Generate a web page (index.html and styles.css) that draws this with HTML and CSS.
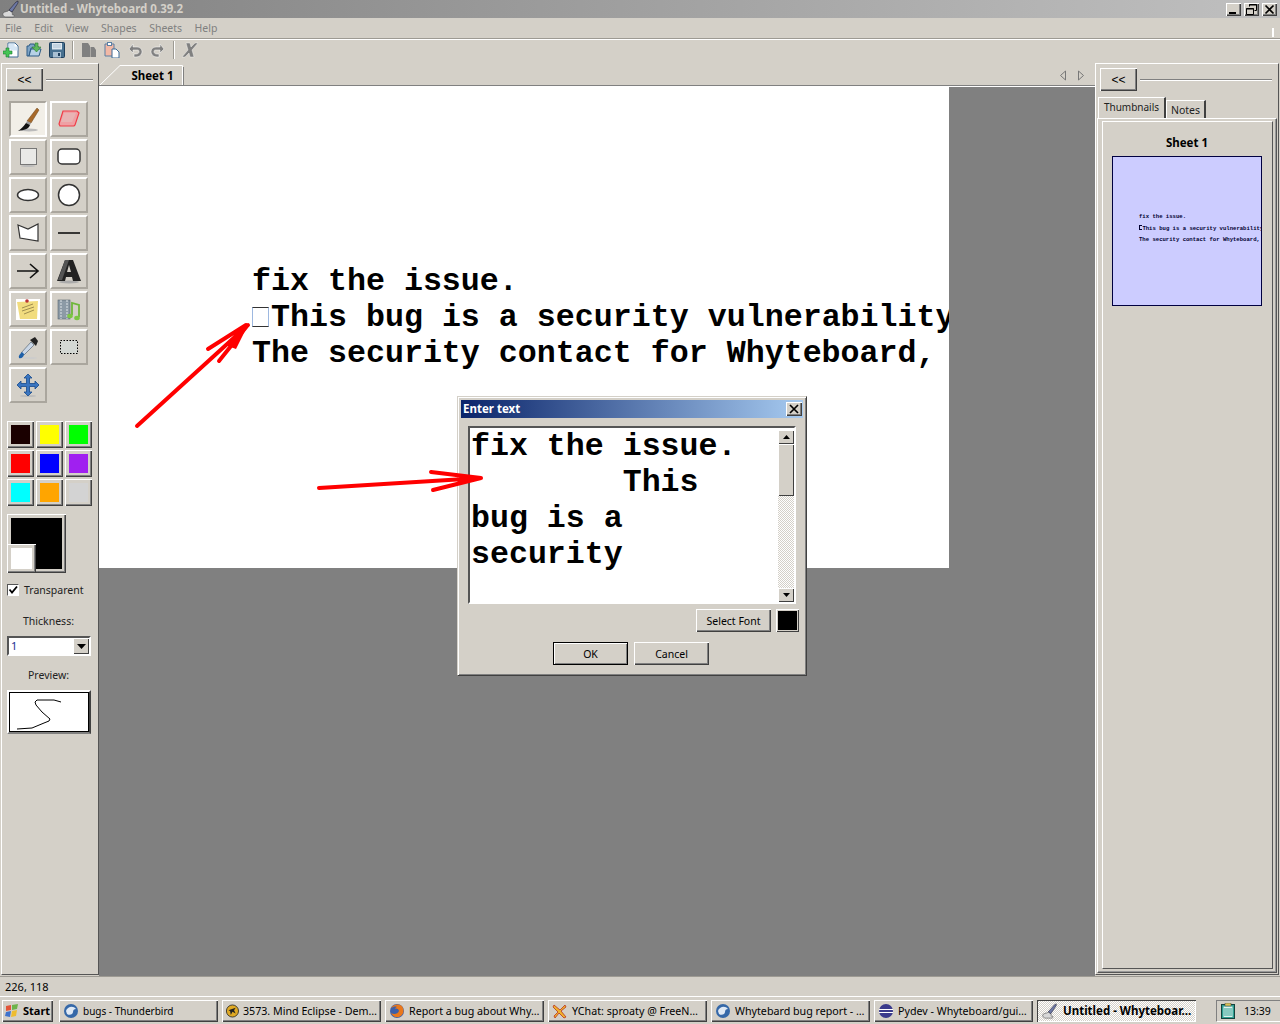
FILE: index.html
```html
<!DOCTYPE html>
<html lang="en">
<head>
    <meta charset="UTF-8">
    <title>Untitled - Whyteboard 0.39.2</title>
    <link rel="stylesheet" href="styles.css">
</head>
<body>
    <!-- window title -->
    <header class="titlebar">
        <svg class="app-icon" width="18" height="18" viewBox="0 0 18 18"><path d="M1 13c2-2 5-1 6-3l3 2c1 2-1 3 2 3 1 1 0 2-1 2H4c-2 0-4-2-3-4z" fill="#d8d8d8" stroke="#555" stroke-width=".7"/><path d="M7 10l7-8 2-1 0 2-6 9z" fill="#6d78a5" stroke="#223" stroke-width=".6"/></svg>
        <span class="title-text">Untitled - Whyteboard 0.39.2</span>
        <div class="win-buttons">
            <button class="win-btn"><svg width="15" height="13"><rect x="3" y="9" width="7" height="2" fill="#000"/></svg></button>
            <button class="win-btn"><svg width="15" height="13"><path d="M5.5 3.5V1.5h7v6h-2M2.5 5.5h7v6h-7z" fill="none" stroke="#000"/><path d="M5 2h8M2 6h8" stroke="#000"/></svg></button>
            <button class="win-btn"><svg width="15" height="13"><path d="M3.5 2.5l8 8M11.500 2.5l-8 8" stroke="#000" stroke-width="1.7"/></svg></button>
        </div>
    </header>

    <nav class="menubar">
        <span>File</span><span>Edit</span><span>View</span><span>Shapes</span><span>Sheets</span><span>Help</span>
        <i class="menu-grip"></i>
    </nav>

    <div class="toolbar">
        <svg class="tb-icon" viewBox="0 0 16 16"><path d="M5 1h7l3 3v11H5z" fill="#fff" stroke="#3d6b96"/><path d="M5.500 1.500h6v3h3v4H9L5.500 6z" fill="#d5e6f4"/><path d="M3 6h3v3h3v3H6v3H3v-3H0V9h3z" fill="#46c455" stroke="#1d7d33" stroke-width=".6"/></svg>
        <svg class="tb-icon" viewBox="0 0 16 16"><path d="M1 14V4h2l1-2h4l1 2h3v2H5L3 14z" fill="#7ea4c6" stroke="#2d5b85"/><path d="M3 14l2-7h10l-2 7z" fill="#b6d1e6" stroke="#2d5b85"/><path d="M9 1h3v4h3l-4.500 5L6 5h3z" fill="#5eb85c" stroke="#2c7d30" stroke-width=".6"/></svg>
        <svg class="tb-icon" viewBox="0 0 16 16"><rect x=".5" y=".5" width="15" height="15" rx="1" fill="#47708f" stroke="#1f3f5c"/><rect x="3" y="1" width="10" height="6.500" fill="#dfe8ef"/><path d="M4 3h8M4 5h8" stroke="#a9c0d2"/><rect x="4" y="10" width="8" height="5.500" fill="#a9c0d2"/><rect x="9" y="11" width="2" height="3" fill="#1f3f5c"/></svg>
        <i class="tb-sep"></i>
        <svg class="tb-icon" viewBox="0 0 16 16"><path d="M1 1h6l2 3v11H1z" fill="#808080"/><path d="M9.500 5H13l2 3v7H9.500z" fill="#808080"/></svg>
        <svg class="tb-icon" viewBox="0 0 16 16"><path d="M1 2h9v12H1z" fill="#f2b8a5" stroke="#5a7fa3"/><rect x="3.500" y=".5" width="4" height="3" fill="#fff" stroke="#5a7fa3"/><path d="M8 7h4l3 3v6H8z" fill="#fff" stroke="#3d6b96"/></svg>
        <svg class="tb-icon" viewBox="0 0 16 16"><path d="M2 7l4-5v3h4c3 0 5 2 5 4.500S13 15 9 15H7v-3h2c2 0 3-1 3-2.500S11 8 10 8H6v3z" fill="#808080" stroke="#fff" stroke-width=".5"/></svg>
        <svg class="tb-icon" viewBox="0 0 16 16"><path d="M14 7l-4-5v3H6C3 5 1 7 1 9.500S3 15 7 15h2v-3H7c-2 0-3-1-3-2.500S5 8 6 8h4v3z" fill="#808080" stroke="#fff" stroke-width=".5"/></svg>
        <i class="tb-sep"></i>
        <svg class="tb-icon" viewBox="0 0 16 16"><path d="M4 1h4l1 4 4-4h3L10 8l2 7H8L7 11l-4 4H0l6-7z" fill="#808080" stroke="#fff" stroke-width=".4"/></svg>
    </div>

    <main class="main">
        <!-- tools on the left -->
        <aside class="side side-left">
            <div class="side-head">
                <button class="btn collapse">&lt;&lt;</button>
                <i class="sash"></i>
            </div>
            <div class="tools">
                <button class="tool active"><svg width="26" height="26" viewBox="0 0 26 26"><ellipse cx="14" cy="24" rx="9" ry="1.500" fill="#bbb"/><path d="M22 2l2 2-8 13-4-2z" fill="#a8692a" stroke="#6b4416" stroke-width=".5"/><path d="M12 15l4 2-1 2-4-2z" fill="#999"/><path d="M11 17l4 2c-1 4-6 5-12 6 3-2 5-4 8-8z" fill="#111"/></svg></button>
                <button class="tool"><svg width="26" height="26" viewBox="0 0 26 26"><path d="M7 5h14l2 2-4 12-1 1H4l-1-2z" fill="#efa0a4" stroke="#f03c46" stroke-width="1.200"/><path d="M8 7h12l-4 9H5z" fill="#e8b4b4"/></svg></button>
                <button class="tool"><svg width="24" height="24" viewBox="0 0 24 24"><ellipse cx="12" cy="21" rx="7" ry="1" fill="#bbb"/><rect x="4.500" y="3.500" width="16" height="16" fill="#e9e9e7" stroke="#777"/></svg></button>
                <button class="tool"><svg width="26" height="26" viewBox="0 0 26 26"><rect x="2" y="5" width="22" height="15" rx="4" fill="#fff" stroke="#333" stroke-width="1.500"/></svg></button>
                <button class="tool"><svg width="26" height="26" viewBox="0 0 26 26"><ellipse cx="13" cy="13" rx="10.500" ry="5.500" fill="#fff" stroke="#333" stroke-width="1.500"/></svg></button>
                <button class="tool"><svg width="26" height="26" viewBox="0 0 26 26"><circle cx="13" cy="13" r="10.500" fill="#fff" stroke="#333" stroke-width="1.500"/></svg></button>
                <button class="tool"><svg width="26" height="26" viewBox="0 0 26 26"><path d="M3 5l10 4 10-5v17L5 18z" fill="#fff" stroke="#333" stroke-width="1.200"/></svg></button>
                <button class="tool"><svg width="26" height="26" viewBox="0 0 26 26"><path d="M2 13h22" stroke="#111" stroke-width="1.600"/></svg></button>
                <button class="tool"><svg width="26" height="26" viewBox="0 0 26 26"><path d="M2 13h21M15 6l8 7-8 7" fill="none" stroke="#111" stroke-width="1.600"/></svg></button>
                <button class="tool"><svg width="26" height="26" viewBox="0 0 26 26"><ellipse cx="13" cy="24" rx="10" ry="1.500" fill="#aaa"/><path d="M9 2h8l8 21h-8l-1-4h-6l-1 4H1z" fill="#222"/><path d="M13 7l-2 7h4z" fill="#d4d0c8"/><path d="M9 2h4L6 22H2z" fill="#555"/></svg></button>
                <button class="tool"><svg width="26" height="26" viewBox="0 0 26 26"><rect x="1" y="3" width="24" height="21" fill="#fff"/><path d="M2 6l21-1-1 18H5z" fill="#f1dc7e"/><circle cx="12" cy="5" r="1.800" fill="#b33"/><path d="M7 12l11-4M7 15l12-4M9 18l10-4" stroke="#8a7a44" stroke-width=".8"/></svg></button>
                <button class="tool"><svg width="26" height="26" viewBox="0 0 26 26"><rect x="2" y="4" width="12" height="19" fill="#8c9aa6" stroke="#56636e" stroke-width=".6"/><path d="M5 4v19M11 4v19" stroke="#dfe4e8" stroke-dasharray="2 1"/><path d="M16 19V7l7 2v12" fill="none" stroke="#6fb73c" stroke-width="1.800"/><ellipse cx="14" cy="20" rx="2.800" ry="2.200" fill="#7cc544"/><ellipse cx="21" cy="22" rx="2.800" ry="2.200" fill="#7cc544"/></svg></button>
                <button class="tool"><svg width="26" height="26" viewBox="0 0 26 26"><ellipse cx="14" cy="24" rx="8" ry="1" fill="#ccc"/><path d="M6 19L16 8l3 3L9 21z" fill="#c9d6e6" stroke="#456" stroke-width=".6"/><path d="M15 6l6 6 2-5-3-4z" fill="#222"/><path d="M7 18c-2 2-4 4-3 6 2 1 5-1 5-4z" fill="#1d5fa8"/></svg></button>
                <button class="tool"><svg width="24" height="24" viewBox="0 0 24 24"><rect x="3.500" y="5.500" width="17" height="13" fill="#d4d8d4" stroke="#000" stroke-dasharray="1.500 1.500"/></svg></button>
                <button class="tool"><svg width="26" height="26" viewBox="0 0 26 26"><ellipse cx="13" cy="24" rx="8" ry="1" fill="#bbb"/><path d="M13 2l4 4h-2.500v5.500H20V9l4 4-4 4v-2.500h-5.500V20H17l-4 4-4-4h2.500v-5.500H6V17l-4-4 4-4v2.500h5.500V6H9z" fill="#3a75c0" stroke="#174a8c" stroke-width=".8"/></svg></button>
            </div>

            <div class="swatches">
                <span class="swatch"><i class="c-dark"></i></span>
                <span class="swatch"><i class="c-yellow"></i></span>
                <span class="swatch"><i class="c-lime"></i></span>
                <span class="swatch"><i class="c-red"></i></span>
                <span class="swatch"><i class="c-blue"></i></span>
                <span class="swatch"><i class="c-purple"></i></span>
                <span class="swatch"><i class="c-cyan"></i></span>
                <span class="swatch"><i class="c-orange"></i></span>
                <span class="swatch"><i class="c-grey"></i></span>
            </div>

            <div class="picker">
                <span class="picker-bg"><i></i></span>
                <span class="picker-fg"><i></i></span>
            </div>

            <label class="check-row">
                <span class="checkbox"><svg width="10" height="10" viewBox="0 0 10 10"><path d="M1.500 4.500l2.500 3 5-6" fill="none" stroke="#000" stroke-width="1.800"/></svg></span>
                Transparent
            </label>
            <p class="side-label thick-label">Thickness:</p>
            <div class="combo">
                <span class="combo-val">1</span>
                <span class="combo-btn"><svg width="9" height="5"><path d="M0 0h9L4.500 5z" fill="#000"/></svg></span>
            </div>
            <p class="side-label preview-label">Preview:</p>
            <div class="preview">
                <svg width="76" height="38" viewBox="0 0 76 38"><path d="M6 35l15-1 12-5 5-2 1-2-8-7-6-7-1-3 2-2h17l7 2" fill="none" stroke="#000"/></svg>
            </div>
        </aside>

        <!-- tabs and the drawing sheet -->
        <section class="center">
            <div class="tabbar">
                <div class="sheet-tab">
                    <svg class="tab-edge" width="84" height="20" viewBox="0 0 84 20"><path d="M0 20L20 .5h62.500V20" fill="#d4d0c8" stroke="#fff"/><path d="M83.500 2v18" stroke="#808080"/></svg>
                    <span>Sheet 1</span>
                </div>
                <div class="tab-nav">
                    <svg width="8" height="11"><path d="M6.500 1v9l-5-4.500z" fill="none" stroke="#777"/></svg>
                    <svg width="8" height="11"><path d="M1.500 1v9l5-4.500z" fill="none" stroke="#777"/></svg>
                </div>
            </div>
            <div class="canvas">
                <div class="sheet">
                    <pre class="sheet-text">fix the issue.
<span class="box-glyph"></span>This bug is a security vulnerability
The security contact for Whyteboard,</pre>
                </div>
            </div>
        </section>

        <!-- thumbnails on the right -->
        <aside class="side side-right">
            <div class="side-head">
                <button class="btn collapse">&lt;&lt;</button>
                <i class="sash"></i>
            </div>
            <div class="note-tabs">
                <span class="note-tab current">Thumbnails</span>
                <span class="note-tab">Notes</span>
            </div>
            <div class="note-body">
                <div class="thumb-panel">
                    <p class="thumb-title">Sheet 1</p>
                    <div class="thumb">
                        <pre class="thumb-text">fix the issue.
<span class="thumb-box"></span>This bug is a security vulnerability
The security contact for Whyteboard,</pre>
                    </div>
                </div>
            </div>
        </aside>
    </main>

    <footer class="statusbar">226, 118</footer>

    <div class="taskbar">
        <button class="task start">
            <svg width="16" height="16" viewBox="0 0 16 16"><path d="M2 3l5-1v5l-5 1z" fill="#e2553a"/><path d="M8 2l6-1-1 5-5 1z" fill="#6db34a"/><path d="M2 9l5-1-1 6-5-1z" fill="#3f73cc"/><path d="M8 8l5-1-1 6-5 1z" fill="#eebc2f"/></svg>
            Start
        </button>
        <button class="task"><svg width="16" height="16" viewBox="0 0 16 16"><circle cx="8" cy="8" r="7" fill="#3568a8"/><path d="M3 8c1-4 7-6 10-2-2 0-3 1-3 3s-3 4-6 2z" fill="#dfe9f5"/></svg><span class="task-short">bugs - Thunderbird</span></button>
        <button class="task"><svg width="16" height="16" viewBox="0 0 16 16"><circle cx="8" cy="8" r="7.500" fill="#e0aa25" stroke="#222"/><path d="M3 7l9-3-2 3 2 4-4-2-2 4-1-5z" fill="#222"/></svg><span>3573. Mind Eclipse - Dem…</span></button>
        <button class="task"><svg width="16" height="16" viewBox="0 0 16 16"><circle cx="8" cy="8" r="7" fill="#3d5fa8"/><path d="M2 5c2-4 10-5 12 0 2 5-2 10-7 9-2 0-4-2-5-4 3 2 7 1 8-2 0-2-3-3-4-2 0-1 1-2 2-2-2-1-4 0-6 1z" fill="#e9781c"/></svg><span>Report a bug about Why…</span></button>
        <button class="task"><svg width="16" height="16" viewBox="0 0 16 16"><path d="M2 2l6 5 5-5 1 2-5 4 5 6-2 1-5-5-4 5-1-2 4-4-5-5z" fill="#f0b32a" stroke="#b8311f" stroke-width=".8"/></svg><span>YChat: sproaty @ FreeN…</span></button>
        <button class="task"><svg width="16" height="16" viewBox="0 0 16 16"><circle cx="8" cy="8" r="7" fill="#3568a8"/><path d="M3 8c1-4 7-6 10-2-2 0-3 1-3 3s-3 4-6 2z" fill="#dfe9f5"/></svg><span>Whytebard bug report - …</span></button>
        <button class="task"><svg width="16" height="16" viewBox="0 0 16 16"><circle cx="8" cy="8" r="7" fill="#3a3a8c"/><path d="M1 6.500h14M1 9.500h14" stroke="#fff" stroke-width="1.200"/></svg><span>Pydev - Whyteboard/gui…</span></button>
        <button class="task current"><svg width="18" height="16" viewBox="0 0 18 18"><path d="M1 13c2-2 5-1 6-3l3 2c1 2-1 3 2 3 1 1 0 2-1 2H4c-2 0-4-2-3-4z" fill="#d8d8d8" stroke="#555" stroke-width=".7"/><path d="M7 10l7-8 2-1 0 2-6 9z" fill="#6d78a5" stroke="#223" stroke-width=".6"/></svg><span>Untitled - Whyteboar…</span></button>
        <div class="tray">
            <svg width="14" height="16" viewBox="0 0 14 16"><rect x=".5" y="1.500" width="13" height="14" fill="#2f9f92" stroke="#14423c"/><rect x="2.500" y="3.500" width="9" height="10.500" fill="#dff3ee"/><path d="M3 6h8M3 8h8M3 10h8M3 12h8" stroke="#2f9f92"/><rect x="4" y="0" width="6" height="3" fill="#d8c25a" stroke="#444" stroke-width=".5"/></svg>
            <span>13:39</span>
        </div>
    </div>

    <!-- text dialog floats over the window -->
    <div class="dialog">
        <div class="dialog-title">
            <span>Enter text</span>
            <button class="win-btn"><svg width="16" height="14"><path d="M4 3l8 8M12 3l-8 8" stroke="#000" stroke-width="1.700"/></svg></button>
        </div>
        <div class="dialog-body">
            <div class="textbox">
                <pre class="textbox-text">fix the issue.
        This
bug is a
security</pre>
                <div class="scrollbar">
                    <span class="sb-btn"><svg width="7" height="4"><path d="M3.500 0L7 4H0z"/></svg></span>
                    <span class="sb-thumb"></span>
                    <span class="sb-track"></span>
                    <span class="sb-btn"><svg width="7" height="4"><path d="M0 0h7L3.500 4z"/></svg></span>
                </div>
            </div>
            <div class="font-row">
                <button class="btn font-btn">Select Font</button>
                <span class="color-btn"><i></i></span>
            </div>
            <div class="ok-row">
                <button class="btn dlg-btn default">OK</button>
                <button class="btn dlg-btn">Cancel</button>
            </div>
        </div>
    </div>

    <!-- red arrows drawn on the screenshot -->
    <svg class="arrows" width="1280" height="1024" viewBox="0 0 1280 1024">
        <g fill="none" stroke="#f00" stroke-width="4" stroke-linecap="round" stroke-linejoin="round">
            <path d="M137 426L248 325M208 349l38-24M219 361l28-35"/>
            <path d="M319 488L481 478M431 472l50 6M433 490l48-12"/>
        </g>
        <path d="M225 345l23-20-12 24zM460 476l23 2-22 6z" fill="#f00"/>
    </svg>
</body>
</html>
```

FILE: styles.css
```css
* {
    box-sizing: border-box;
}

html, body {
    margin: 0;
    height: 100%;
}

body {
    width: 1280px;
    height: 1024px;
    overflow: hidden;
    display: flex;
    flex-direction: column;
    background: #d4d0c8;
    color: #000;
    font-family: "Noto Sans", "DejaVu Sans", sans-serif;
    font-size: 11px;
    position: relative;
}

p, pre {
    margin: 0;
}

i {
    display: block;
    font-style: normal;
}

button {
    font: inherit;
    color: inherit;
    padding: 0;
    background: #d4d0c8;
}

/* title bar */
.titlebar {
    height: 18px;
    flex: none;
    display: flex;
    align-items: center;
    background: linear-gradient(to right, #808080, #c0c0c0);
    padding-left: 2px;
}

.title-text {
    margin: 0 0 2px 0;
    color: #d4d0c8;
    font-weight: bold;
    font-size: 11.5px;
}

.win-buttons {
    margin-left: auto;
    margin-right: 3px;
    display: flex;
    gap: 2px;
}

.win-btn {
    width: 15px;
    height: 13px;
    border: 0;
    display: block;
    background: #d4d0c8;
    box-shadow: inset 1px 1px #fff, inset -1px -1px #404040, inset -2px -2px #808080;
}

.win-btn svg {
    display: block;
}

.win-buttons .win-btn + .win-btn {
    margin-left: 1px;
}

/* menu and toolbar */
.menubar {
    height: 22px;
    flex: none;
    display: flex;
    align-items: center;
    gap: 12.5px;
    padding: 0 0 2px 5px;
    color: #808080;
    font-size: 10.5px;
    border-bottom: 1px solid #fff;
    box-shadow: inset 0 -1px #9d9a93;
    position: relative;
}

.menu-grip {
    position: absolute;
    right: 6px;
    top: 10px;
    width: 2px;
    height: 9px;
    background: #fff;
}

.toolbar {
    height: 23px;
    flex: none;
    display: flex;
    align-items: center;
    padding: 0 0 3px 3px;
    gap: 7px;
}

.tb-icon {
    width: 16px;
    height: 16px;
}

.tb-sep {
    width: 2px;
    height: 18px;
    background: #9d9a93;
    border-right: 1px solid #fff;
}

/* main area */
.main {
    flex: 1;
    display: flex;
    min-height: 0;
}

.side {
    flex: none;
    background: #d4d0c8;
    border: 1px solid #fff;
    border-right-color: #555;
    border-bottom-color: #555;
}

.side-left {
    width: 98px;
    margin-left: 1px;
    margin-bottom: 1px;
    padding: 4px 0 0 4px;
}

.side-right {
    width: 184px;
    padding: 4px 1px 1px 1px;
    margin: 0 1px 1px 0;
    display: flex;
    flex-direction: column;
}

.side-head {
    display: flex;
    align-items: center;
    gap: 3px;
}

.side-right .side-head {
    padding-left: 3px;
}

.btn {
    background: #d4d0c8;
    border: 0;
    box-shadow: inset 1px 1px #fff, inset -1px -1px #404040, inset -2px -2px #808080;
    font-size: 10.5px;
}

.collapse {
    width: 37px;
    height: 23px;
    font-family: "Liberation Sans", sans-serif;
    font-size: 12px;
    flex: none;
}

.sash {
    height: 2px;
    flex: 1;
    margin-right: 5px;
    background: #808080;
    border-bottom: 1px solid #fff;
}

/* tool grid */
.tools {
    display: grid;
    grid-template-columns: 38px 38px;
    grid-auto-rows: 36px;
    gap: 2px 3px;
    margin: 10px 0 0 3px;
}

.tool {
    display: flex;
    align-items: center;
    justify-content: center;
    border: 2px solid;
    border-color: #fff #aaa69e #aaa69e #fff;
}

.tool.active {
    background: #f2efe8;
    border-color: #aaa69e #fff #fff #aaa69e;
}

.swatches {
    display: grid;
    grid-template-columns: repeat(3, 27px);
    grid-auto-rows: 27px;
    gap: 2px;
    margin: 18px 0 0 1px;
}

.swatch {
    display: block;
    padding: 4px;
    box-shadow: inset 1px 1px #fff, inset -1px -1px #404040, inset -2px -2px #808080;
}

.swatch i {
    height: 100%;
}

.c-dark { background: #1a0000; }
.c-yellow { background: #ff0; }
.c-lime { background: #0f0; }
.c-red { background: #f00; }
.c-blue { background: #00f; }
.c-purple { background: #a020f0; }
.c-cyan { background: #0ff; }
.c-orange { background: #ffa500; }
.c-grey { background: #d3d3d3; }

.picker {
    position: relative;
    width: 59px;
    height: 59px;
    margin: 8px 0 0 1px;
}

.picker-bg, .picker-fg {
    display: block;
    padding: 4px;
    box-shadow: inset 1px 1px #fff, inset -1px -1px #404040, inset -2px -2px #808080;
    background: #d4d0c8;
}

.picker-bg {
    height: 100%;
}

.picker-bg i {
    height: 100%;
    background: #000;
}

.picker-fg {
    position: absolute;
    left: 0;
    bottom: 0;
    width: 29px;
    height: 29px;
}

.picker-fg i {
    height: 100%;
    background: #fff;
}

.check-row {
    display: flex;
    align-items: center;
    gap: 5px;
    height: 14px;
    line-height: 12px;
    margin: 10px 0 0 1px;
    font-size: 10.5px;
    color: #222;
}

.checkbox {
    width: 12px;
    height: 12px;
    display: flex;
    align-items: center;
    justify-content: center;
    background: #fff;
    border: 1px solid;
    border-color: #555 #fff #fff #555;
}

.side-label {
    width: 83px;
    height: 14px;
    line-height: 14px;
    text-align: center;
    font-size: 10.5px;
    color: #222;
}

.thick-label {
    margin: 17px 0 0 1px;
}

.combo {
    width: 84px;
    height: 20px;
    margin: 8px 0 0 1px;
    display: flex;
    background: #fff;
    border: 2px solid;
    border-color: #555 #fff #fff #555;
}

.combo-val {
    flex: 1;
    line-height: 16px;
    padding-left: 2px;
    color: #203090;
}

.combo-btn {
    width: 16px;
    display: flex;
    align-items: center;
    justify-content: center;
    background: #d4d0c8;
    box-shadow: inset 1px 1px #fff, inset -1px -1px #404040;
}

.preview-label {
    margin: 12px 0 0 1px;
}

.preview {
    width: 84px;
    height: 44px;
    margin: 8px 0 0 1px;
    padding: 2px;
    background: #fff;
    border: 2px solid;
    border-color: #fff #404040 #808080 #fff;
    box-shadow: inset 1px 1px #000, inset -1px -1px #000;
}

.preview svg {
    display: block;
}

/* center */
.center {
    flex: 1;
    min-width: 0;
    display: flex;
    flex-direction: column;
}

.tabbar {
    height: 24px;
    flex: none;
    display: flex;
    align-items: flex-end;
    border-bottom: 1px solid #fff;
    box-shadow: inset 0 -1px #808080;
    padding-left: 1px;
}

.sheet-tab {
    position: relative;
    width: 84px;
    height: 20px;
    text-align: center;
    font-weight: bold;
    font-size: 11.5px;
    line-height: 21px;
    padding-left: 21px;
    margin-bottom: 1px;
}

.tab-edge {
    position: absolute;
    left: 0;
    top: 0;
}

.sheet-tab span {
    position: relative;
}

.tab-nav {
    margin-left: auto;
    margin-right: 10px;
    margin-bottom: 5px;
    display: flex;
    gap: 10px;
}

.tab-nav svg {
    display: block;
}

.canvas {
    flex: 1;
    background: #808080;
}

.sheet {
    width: 850px;
    height: 481px;
    background: #fff;
    overflow: hidden;
    position: relative;
}

.sheet-text {
    position: absolute;
    left: 153px;
    top: 177px;
    font-family: "Liberation Mono", monospace;
    font-weight: bold;
    font-size: 31.65px;
    line-height: 36px;
}

.box-glyph {
    display: inline-block;
    width: 17px;
    height: 20px;
    margin-right: 2px;
    background: #fff;
    border: 1px solid;
    border-color: #333 #9db8e0 #333 #9db8e0;
    vertical-align: -1px;
}

/* right panel */
.note-tabs {
    display: flex;
    align-items: flex-end;
    margin: 6px 0 0 1px;
    height: 21px;
    flex: none;
}

.note-tab {
    width: 40px;
    height: 18px;
    text-align: center;
    border: 1px solid;
    border-color: #fff #404040 transparent #fff;
    border-bottom: 0;
    border-right-width: 2px;
    line-height: 18px;
    font-size: 10.5px;
    color: #222;
}

.note-tab.current {
    width: 68px;
    height: 21px;
    line-height: 18px;
    font-size: 10px;
}

.note-body {
    flex: 1;
    min-height: 0;
    display: flex;
    padding: 2px 3px 3px 4px;
    border: 1px solid;
    border-color: #fff #555 #555 #fff;
    box-shadow: inset -1px -1px #999;
}

.thumb-panel {
    flex: 1;
    border: 1px solid;
    border-color: #fff #555 #555 #fff;
    padding: 14px 0 0 9px;
}

.thumb-title {
    width: 150px;
    height: 14px;
    line-height: 14px;
    text-align: center;
    font-size: 11.5px;
    font-weight: bold;
}

.thumb {
    width: 150px;
    height: 150px;
    margin-top: 6px;
    background: #ccf;
    border: 1px solid #000040;
    overflow: hidden;
    padding: 54px 0 0 26px;
}

.thumb-text {
    font-family: "Liberation Mono", monospace;
    font-weight: bold;
    font-size: 5.6px;
    line-height: 11.5px;
    color: #000030;
}

.thumb-box {
    display: inline-block;
    width: 3px;
    height: 5px;
    margin-right: .4px;
    border: 1px solid #000030;
    border-right: 0;
}

/* status and task bar */
.statusbar {
    height: 21px;
    flex: none;
    line-height: 20px;
    padding-left: 5px;
    border-top: 1px solid #9d9a93;
    border-bottom: 1px solid #fff;
}

.taskbar {
    height: 27px;
    flex: none;
    display: flex;
    align-items: flex-start;
    padding: 3px 0 0 2px;
    gap: 4px;
}

.task {
    width: 159px;
    height: 22px;
    flex: none;
    display: flex;
    align-items: center;
    gap: 4px;
    padding: 0 4px 1px;
    border: 0;
    box-shadow: inset 1px 1px #fff, inset -1px -1px #404040, inset -2px -2px #808080;
    white-space: nowrap;
    text-align: left;
    font-size: 10.7px;
}

.task .task-short {
    font-size: 10px;
}

.task.start {
    width: 51px;
    margin-right: 2px;
    padding: 0 2px 1px;
    gap: 3px;
    font-size: 11px;
    font-weight: bold;
}

.task.current {
    font-size: 11.5px;
    font-weight: bold;
    background: repeating-conic-gradient(#fff 0 25%, #d4d0c8 0 50%) 0 0 / 2px 2px;
    box-shadow: inset 1px 1px #404040, inset -1px -1px #fff;
}

.tray {
    margin-left: 16px;
    flex: 1;
    height: 22px;
    display: flex;
    align-items: center;
    gap: 9px;
    padding-left: 4px;
    font-size: 10.5px;
    border: 1px solid;
    border-color: #808080 #fff #fff #808080;
    border-right: 0;
}

/* dialog */
.dialog {
    position: absolute;
    left: 457px;
    top: 396px;
    width: 350px;
    height: 280px;
    padding: 3px;
    background: #d4d0c8;
    border: 1px solid;
    border-color: #d4d0c8 #404040 #404040 #d4d0c8;
    box-shadow: inset 1px 1px #fff, inset -1px -1px #808080;
}

.dialog-title {
    height: 18px;
    display: flex;
    align-items: center;
    justify-content: space-between;
    padding: 0 1px 1px 2px;
    background: linear-gradient(to right, #0a246a, #a6caf0);
    color: #fff;
    font-weight: bold;
    font-size: 11.5px;
}

.dialog-title .win-btn {
    width: 16px;
    height: 14px;
    margin-top: 1px;
}

.dialog-body {
    padding: 8px 6px 0 7px;
}

.textbox {
    width: 328px;
    height: 178px;
    display: flex;
    background: #fff;
    border: 2px solid;
    border-color: #555 #fff #fff #555;
}

.textbox-text {
    flex: 1;
    padding: 1px 0 0 1px;
    font-family: "Liberation Mono", monospace;
    font-weight: bold;
    font-size: 31.6px;
    line-height: 36px;
}

.scrollbar {
    width: 16px;
    margin: 2px 0 0;
    display: flex;
    flex-direction: column;
}

.sb-btn {
    height: 14px;
    flex: none;
    display: flex;
    align-items: center;
    justify-content: center;
    background: #d4d0c8;
    box-shadow: inset 1px 1px #fff, inset -1px -1px #404040;
}

.sb-thumb {
    height: 52px;
    flex: none;
    background: #d4d0c8;
    box-shadow: inset 1px 1px #fff, inset -1px -1px #404040;
}

.sb-track {
    flex: 1;
    background: repeating-conic-gradient(#fff 0 25%, #d4d0c8 0 50%) 0 0 / 2px 2px;
}

.font-row {
    display: flex;
    justify-content: flex-end;
    gap: 5px;
    margin: 5px -2px 0 0;
}

.font-btn {
    width: 75px;
    height: 23px;
}

.color-btn {
    width: 23px;
    height: 23px;
    padding: 2px;
    background: #d4d0c8;
    box-shadow: inset 1px 1px #fff, inset -1px -1px #404040;
}

.color-btn i {
    height: 100%;
    background: #000;
}

.ok-row {
    display: flex;
    justify-content: center;
    gap: 6px;
    margin: 10px 0 0 -1px;
    width: 328px;
}

.dlg-btn {
    width: 75px;
    height: 23px;
}

.dlg-btn.default {
    box-shadow: inset 0 0 0 1px #000, inset 2px 2px #fff, inset -2px -2px #808080;
}

.arrows {
    position: absolute;
    left: 0;
    top: 0;
    pointer-events: none;
}
```
